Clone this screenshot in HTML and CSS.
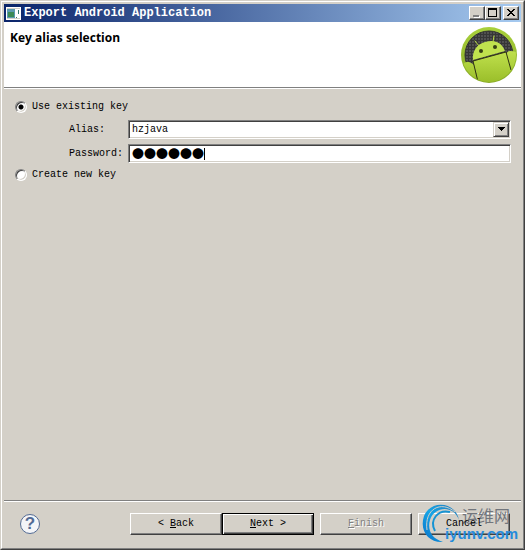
FILE: index.html
```html
<!DOCTYPE html>
<html lang="en">
<head>
<meta charset="utf-8">
<title>Export Android Application</title>
<link rel="stylesheet" href="styles.css">
</head>
<body>
<main class="window">
  <div class="frame">
    <header class="titlebar">
      <svg class="app-icon" width="15" height="13" viewBox="0 0 15 13" aria-hidden="true">
        <path fill="#fff" d="M0 0h15v13H0z"/>
        <path fill="#d4d0c8" d="M1 1h13v11H1z"/>
        <path fill="#5c9ab0" d="M1 2h8v9H1z"/>
        <path fill="#3b8a55" d="M2 5h6v5H2z"/>
        <path fill="#fff" d="M9 2h5v9H9z"/>
        <path fill="#357a70" d="M12 3h1v4h-1zM10 10h1v1h-1z"/>
      </svg>
      <h1 class="title">Export Android Application</h1>
      <div class="controls">
        <button class="control" type="button" aria-label="Minimize"><svg width="12" height="10" viewBox="0 0 12 10"><path fill="#fff" d="M3 8h6v2H3z"/><path fill="#808080" d="M2 7h6v2H2z"/></svg></button>
        <button class="control" type="button" aria-label="Maximize"><svg width="12" height="10" viewBox="0 0 12 10"><path fill="#000" fill-rule="evenodd" d="M1 0h9v9H1zM2 2v6h7V2z"/></svg></button>
        <button class="control close" type="button" aria-label="Close"><svg width="12" height="10" viewBox="0 0 12 10" shape-rendering="crispEdges"><path fill="#000" d="M2 1h2v1h1v1h2V2h1V1h2v1H9v1H8v1H7v1h1v1h1v1h1v1H8V7H7V6H5v1H4v1H2V7h1V6h1V5h1V4H4V3H3V2H2z"/></svg></button>
      </div>
    </header>
    <section class="banner">
      <h2 class="heading">Key alias selection</h2>
      <svg class="robot" width="58" height="58" viewBox="0 0 58 58" aria-hidden="true">
        <defs>
          <linearGradient id="rim" x1="0" y1="0" x2="0" y2="1"><stop offset="0" stop-color="#a9d13c"/><stop offset="1" stop-color="#86a824"/></linearGradient>
          <linearGradient id="body" x1="0" y1="0" x2="0" y2="1"><stop offset="0" stop-color="#bfe04c"/><stop offset="1" stop-color="#98bc28"/></linearGradient>
          <pattern id="mesh" width="3" height="3" patternUnits="userSpaceOnUse"><path fill="#363636" d="M0 0h3v3H0z"/><path fill="#505050" d="M0 0h2v2H0z"/></pattern>
          <clipPath id="disc"><circle cx="29" cy="29" r="27"/></clipPath>
        </defs>
        <circle cx="29" cy="29" r="28" fill="url(#rim)"/>
        <circle cx="29" cy="29" r="24" fill="url(#mesh)" stroke="#333" stroke-width="1"/>
        <g clip-path="url(#disc)">
          <path fill="url(#body)" d="M13 35 46 26 54 58H19z"/>
          <path fill="url(#body)" d="M2 39q4-4 7-3t5 3l5 20H2zM46 29q1-4 4-4 5 0 8 2v25l-6 2z"/>
          <path fill="none" stroke="#303512" stroke-width="1" d="m13 35 5 21M46 26l5 18"/>
        </g>
        <path fill="#c0e24e" d="M13 34C12 25 17 18 25 16c9-3 17 0 20 9z"/>
        <path fill="none" stroke="#303512" stroke-width="1" d="m13 35 33-9"/>
        <path fill="none" stroke="#b8dc43" stroke-width="1" stroke-linecap="round" d="m19 20-4-5M33 16l1-6"/>
        <circle cx="21" cy="25" r="2" fill="#374014"/><circle cx="35" cy="21" r="2" fill="#374014"/>
      </svg>
    </section>
    <form class="dialog">
      <div class="options">
        <label class="choice"><input class="radio" type="radio" name="key" checked>Use existing key</label>
        <div class="fields">
          <label for="alias">Alias:</label>
          <div class="field">
            <select class="entry" id="alias"><option>hzjava</option></select>
            <span class="arrow"><svg width="9" height="5" viewBox="0 0 9 5" shape-rendering="crispEdges"><path d="M1 0h7v1H7v1H6v1H5v1H4V3H3V2H2V1H1z"/></svg></span>
          </div>
          <label for="password">Password:</label>
          <div class="field">
            <input class="entry secret" id="password" type="password">
            <span class="dots" aria-hidden="true">●●●●●●</span>
          </div>
        </div>
        <label class="choice"><input class="radio" type="radio" name="key">Create new key</label>
      </div>
      <footer class="footer">
        <button class="help" type="button" aria-label="Help">?</button>
        <div class="actions">
          <div class="pair">
            <button class="push" type="button">&lt; <u>B</u>ack</button>
            <button class="push primary" type="button"><u>N</u>ext &gt;</button>
          </div>
          <button class="push" type="button" disabled><u>F</u>inish</button>
          <div class="cancel-box">
            <button class="push" type="button"><span class="cancel-label">Cancel</span></button>
            <div class="mark">
              <svg width="41" height="42" viewBox="0 0 41 42" aria-hidden="true">
                <defs><linearGradient id="swirl" x1="0" y1="1" x2="1" y2="0"><stop offset="0" stop-color="#0871c8"/><stop offset=".5" stop-color="#16a5e6"/><stop offset="1" stop-color="#2478b8"/></linearGradient></defs>
                <path fill="url(#swirl)" d="M37 17C34-1 9-4 2 13-3 28 7 40 21 39 10 36 5 27 8 17 12 4 31 1 37 17z"/>
                <path fill="none" stroke="#d4d0c8" stroke-width="1" d="M5 27C2 6 19-3 33 9"/>
                <path fill="none" stroke="#1593d3" stroke-width="2" d="M13 28C7 17 16 6 28 9"/>
              </svg>
              <span class="mark-name" lang="zh">运维网</span>
              <span class="mark-site">iyunv.com</span>
            </div>
          </div>
        </div>
      </footer>
    </form>
  </div>
</main>
</body>
</html>
```

FILE: styles.css
```css
* { box-sizing: border-box; }

body {
  margin: 0;
  background: #d4d0c8;
  color: #000;
  font: 10px/12px "Liberation Mono", monospace;
}

button, input, select { font: inherit; color: inherit; }

.window {
  min-height: 100vh;
  display: flex;
  border: 1px solid;
  border-color: #d4d0c8 #404040 #404040 #d4d0c8;
}

.frame {
  flex: 1;
  display: flex;
  flex-direction: column;
  padding: 2px;
  border: 1px solid;
  border-color: #fff #808080 #808080 #fff;
}

.titlebar {
  height: 18px;
  display: flex;
  align-items: center;
  padding: 0 2px;
  background: linear-gradient(to right, #0a246a, #a6caf0);
}

.title {
  flex: 1;
  margin: 0 0 0 3px;
  color: #fff;
  font-size: 12px;
  line-height: 18px;
  white-space: nowrap;
}

.controls { display: flex; }

.control {
  width: 16px;
  height: 14px;
  display: flex;
  padding: 1px;
  background: #d4d0c8;
  border: 1px solid;
  border-color: #fff #404040 #404040 #fff;
  box-shadow: inset -1px -1px #808080;
}

.close { margin-left: 2px; }

.banner {
  height: 66px;
  display: flex;
  justify-content: space-between;
  padding: 4px 3px 0 6px;
  background: #fff;
  border-bottom: 1px solid #808080;
  box-shadow: 0 1px #fff;
}

.heading {
  margin: 3px 0 0;
  font: 700 12px/18px "Open Sans", sans-serif;
}

.dialog {
  flex: 1;
  display: flex;
  flex-direction: column;
}

.options {
  flex: 1;
  padding: 11px 10px 0 11px;
}

.choice {
  display: flex;
  align-items: center;
  gap: 5px;
  height: 16px;
}

.radio {
  appearance: none;
  width: 12px;
  height: 12px;
  margin: 0;
  background: #fff;
  border: 1px solid;
  border-color: #808080 #fff #fff #808080;
  border-radius: 50%;
  box-shadow: inset 1px 1px #404040, inset -1px -1px #d4d0c8;
}

.radio:checked { background: radial-gradient(circle, #000 2px, #fff 3px); }

.fields {
  display: grid;
  grid-template-columns: 54px 1fr;
  align-items: center;
  gap: 5px;
  padding: 5px 0 4px 54px;
}

.field { position: relative; }

.entry {
  appearance: none;
  display: block;
  width: 100%;
  height: 19px;
  margin: 0;
  padding: 0 3px;
  background: #fff;
  border: 1px solid;
  border-color: #808080 #fff #fff #808080;
  border-radius: 0;
  box-shadow: inset 1px 1px #404040, inset -1px -1px #d4d0c8;
  outline: 0;
}

.dots {
  position: absolute;
  top: 4px;
  left: 4px;
  height: 12px;
  border-right: 1px solid #000;
  font: 12px/12px "Noto Sans CJK SC", sans-serif;
  pointer-events: none;
}

.arrow {
  position: absolute;
  top: 2px;
  right: 2px;
  bottom: 2px;
  width: 16px;
  display: grid;
  place-items: center;
  background: #d4d0c8;
  border: 1px solid;
  border-color: #d4d0c8 #404040 #404040 #d4d0c8;
  box-shadow: inset 1px 1px #fff, inset -1px -1px #808080;
  pointer-events: none;
}

.footer {
  display: flex;
  align-items: center;
  justify-content: space-between;
  padding: 12px 11px 11px 16px;
  border-top: 1px solid #808080;
  box-shadow: inset 0 1px #fff;
}

.help {
  width: 20px;
  height: 20px;
  padding: 0;
  color: #536b94;
  background: #f4f5f8;
  border: 1px solid #536b94;
  border-radius: 50%;
  font: bold 17px/18px "Liberation Sans", sans-serif;
}

.actions { display: flex; gap: 6px; }

.pair { display: flex; }

.push {
  display: block;
  width: 92px;
  height: 22px;
  padding: 0;
  background: #d4d0c8;
  border: 1px solid;
  border-color: #fff #404040 #404040 #fff;
  box-shadow: inset -1px -1px #808080;
}

.primary {
  border-color: #000;
  box-shadow: inset 1px 1px #fff, inset -1px -1px #404040, inset -2px -2px #808080;
}

.push:disabled {
  color: #808080;
  text-shadow: 1px 1px #fff;
}

.cancel-box {
  position: relative;
  isolation: isolate;
}

.cancel-label {
  position: relative;
  z-index: 1;
}

.mark {
  position: absolute;
  top: -10px;
  left: 4px;
  width: 98px;
  height: 42px;
  pointer-events: none;
}

.mark-name, .mark-site {
  position: absolute;
  white-space: nowrap;
}

.mark-name {
  top: 2px;
  left: 40px;
  color: #71757c;
  font: 16px/20px "Noto Sans CJK SC", sans-serif;
}

.mark-site {
  top: 22px;
  left: 23px;
  color: #258bdb;
  font: bold 15px/18px "Liberation Sans", sans-serif;
}
```
